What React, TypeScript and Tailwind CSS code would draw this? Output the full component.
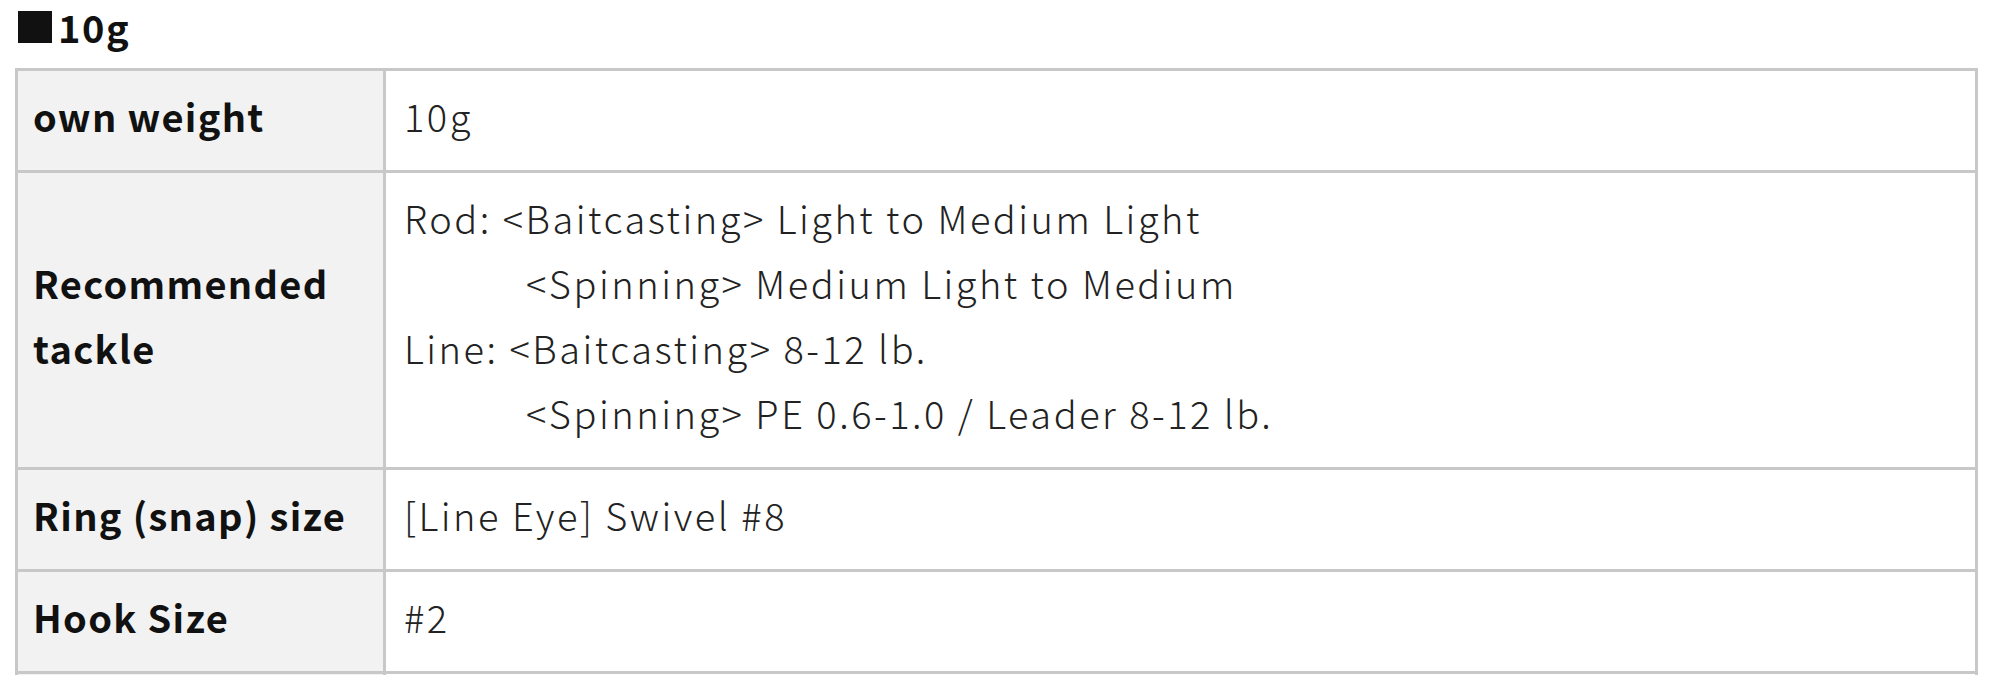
import React from "react";

type Row = { label: React.ReactNode; value: React.ReactNode };

const rows: Row[] = [
  { label: "own weight", value: "10g" },
  {
    label: (
      <>
        Recommended
        <br />
        tackle
      </>
    ),
    value: (
      <>
        <div>Rod: &lt;Baitcasting&gt; Light to Medium Light</div>
        <div className="pl-[122px]">&lt;Spinning&gt; Medium Light to Medium</div>
        <div>Line: &lt;Baitcasting&gt; 8-12 lb.</div>
        <div className="pl-[122px]">&lt;Spinning&gt; PE 0.6-1.0 / Leader 8-12 lb.</div>
      </>
    ),
  },
  { label: "Ring (snap) size", value: "[Line Eye] Swivel #8" },
  { label: "Hook Size", value: "#2" },
  { label: "", value: "" },
];

export default function App() {
  return (
    <div className="h-[675px] overflow-hidden bg-white pl-[15px] pr-[22px] font-['Noto_Sans_CJK_JP','Noto_Sans',sans-serif]">
      {/* Heading */}
      <h2 className="flex h-[68px] items-center pb-[14px] text-[38px] font-bold leading-none tracking-[0.04em] text-[#111]">
        <span className="ml-[3px] mr-[6px] inline-block h-[32px] w-[34px] bg-[#111]" />
        10g
      </h2>

      {/* Spec table */}
      <div className="border-x-[3px] border-t-[3px] border-[#c8c8c8]">
        {rows.map((row, i) => (
          <div key={i} className="grid min-h-[102px] grid-cols-[368px_1fr] border-b-[3px] border-[#c8c8c8]">
            <div className="flex items-center border-r-[3px] border-[#c8c8c8] bg-[#f2f2f2] px-[15px] pt-[12px] pb-[22px] text-[38px] font-bold leading-[65px] tracking-[0.035em] text-[#111]">
              <div>{row.label}</div>
            </div>
            <div className="flex items-center px-[18px] pt-[12px] pb-[22px] text-[38px] font-light leading-[65px] tracking-[0.066em] text-[#222]">
              <div>{row.value}</div>
            </div>
          </div>
        ))}
      </div>
    </div>
  );
}
